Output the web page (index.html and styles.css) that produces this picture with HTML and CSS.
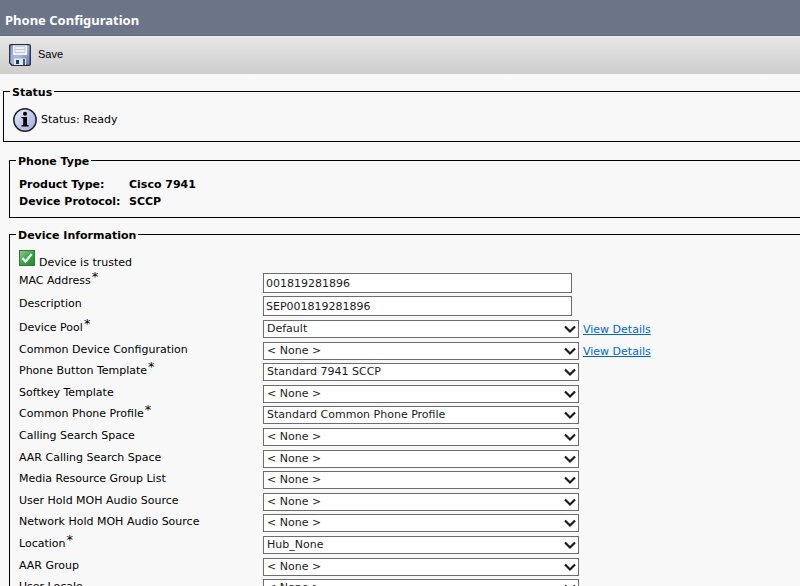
FILE: index.html
```html
<!DOCTYPE html>
<html lang="en">
<head>
<meta charset="utf-8">
<title>Phone Configuration</title>
<link rel="stylesheet" href="styles.css">
</head>
<body>
<svg class="defs" aria-hidden="true">
  <symbol id="chevron" viewBox="0 0 12 9"><path d="M1 1.5 L6 6.5 L11 1.5" fill="none" stroke="#1a1a1a" stroke-width="2.2"/></symbol>
</svg>
<header class="title"><h1>Phone Configuration</h1></header>
<div class="toolbar">
  <button type="button" class="save">
    <svg class="disk" viewBox="0 0 22 22" aria-hidden="true">
      <defs><linearGradient id="disk-body" x1="0" y1="0" x2="1" y2="1"><stop offset="0" stop-color="#8f9fc4"/><stop offset=".5" stop-color="#a9b8dc"/><stop offset="1" stop-color="#5d70a4"/></linearGradient></defs>
      <path d="M2 .7H20Q21.3.7 21.3 2V20Q21.3 21.3 20 21.3H3L.7 19V2Q.7.7 2 .7Z" fill="url(#disk-body)" stroke="#252b3d" stroke-width="1.3"/>
      <path d="M4 1.3H18V11H4Z" fill="#f1f2f5"/>
      <path d="M6 2.5H16V8.5H6ZM6 5.5H16" fill="none" stroke="#c6c8cd"/>
      <path d="M5 14.5H17V21H5Z" fill="#e4e9f0"/>
      <path d="M7 16H10V20H7Z" fill="#143a70"/>
      <path d="M14 15H16V21H14Z" fill="#3a5a8c"/>
    </svg>
    <span>Save</span>
  </button>
</div>
<form class="content">
  <fieldset class="group status">
    <legend>Status</legend>
    <div class="status-line">
      <svg class="info" viewBox="0 0 24 24" aria-hidden="true">
        <defs><linearGradient id="info-fill" x1="0" y1="0" x2="1" y2="1"><stop offset="0" stop-color="#edf2fc"/><stop offset=".5" stop-color="#c0c9ea"/><stop offset="1" stop-color="#a5a9da"/></linearGradient></defs>
        <circle cx="12" cy="12" r="11.2" fill="url(#info-fill)" stroke="#20232e" stroke-width="1.5"/>
        <circle cx="12" cy="5.8" r="2"/>
        <path d="M8.3 9H14V16.8L15.8 17.4V18.5H8.3V17.4L10.2 16.8V10.6L8.3 10.1Z"/>
      </svg>
      <span>Status: Ready</span>
    </div>
  </fieldset>

  <fieldset class="group type">
    <legend>Phone Type</legend>
    <dl class="facts">
      <dt>Product Type:</dt><dd>Cisco 7941</dd>
      <dt>Device Protocol:</dt><dd>SCCP</dd>
    </dl>
  </fieldset>

  <fieldset class="group device">
    <legend>Device Information</legend>
    <div class="trusted">
      <svg class="check" viewBox="0 0 16 16" aria-hidden="true">
        <defs><linearGradient id="check-fill" x1="0" y1="0" x2="1" y2="1"><stop offset="0" stop-color="#8fd08f"/><stop offset=".5" stop-color="#3da64a"/><stop offset="1" stop-color="#1f8a33"/></linearGradient></defs>
        <rect x=".5" y=".5" width="15" height="15" fill="url(#check-fill)" stroke="#3c7043"/>
        <path d="M3.5 8.3L6.6 11.6L12.6 4" fill="none" stroke="#fff" stroke-width="2.3"/>
      </svg>
      <span>Device is trusted</span>
    </div>
    <div class="row text first"><label for="mac">MAC Address<span class="req">*</span></label><input id="mac" type="text" value="001819281896"></div>
    <div class="row text"><label for="desc">Description</label><input id="desc" type="text" value="SEP001819281896"></div>
    <div class="choices">
      <div class="row"><label for="pool">Device Pool<span class="req">*</span></label><span class="pick"><select id="pool"><option>Default</option></select><svg><use href="#chevron"/></svg></span><a href="#pool">View Details</a></div>
      <div class="row"><label for="common">Common Device Configuration</label><span class="pick"><select id="common"><option>&lt; None &gt;</option></select><svg><use href="#chevron"/></svg></span><a href="#common">View Details</a></div>
      <div class="row"><label for="button">Phone Button Template<span class="req">*</span></label><span class="pick"><select id="button"><option>Standard 7941 SCCP</option></select><svg><use href="#chevron"/></svg></span></div>
      <div class="row"><label for="softkey">Softkey Template</label><span class="pick"><select id="softkey"><option>&lt; None &gt;</option></select><svg><use href="#chevron"/></svg></span></div>
      <div class="row"><label for="profile">Common Phone Profile<span class="req">*</span></label><span class="pick"><select id="profile"><option>Standard Common Phone Profile</option></select><svg><use href="#chevron"/></svg></span></div>
      <div class="row"><label for="css">Calling Search Space</label><span class="pick"><select id="css"><option>&lt; None &gt;</option></select><svg><use href="#chevron"/></svg></span></div>
      <div class="row"><label for="aarcss">AAR Calling Search Space</label><span class="pick"><select id="aarcss"><option>&lt; None &gt;</option></select><svg><use href="#chevron"/></svg></span></div>
      <div class="row"><label for="media">Media Resource Group List</label><span class="pick"><select id="media"><option>&lt; None &gt;</option></select><svg><use href="#chevron"/></svg></span></div>
      <div class="row"><label for="usermoh">User Hold MOH Audio Source</label><span class="pick"><select id="usermoh"><option>&lt; None &gt;</option></select><svg><use href="#chevron"/></svg></span></div>
      <div class="row"><label for="netmoh">Network Hold MOH Audio Source</label><span class="pick"><select id="netmoh"><option>&lt; None &gt;</option></select><svg><use href="#chevron"/></svg></span></div>
      <div class="row"><label for="location">Location<span class="req">*</span></label><span class="pick"><select id="location"><option>Hub_None</option></select><svg><use href="#chevron"/></svg></span></div>
      <div class="row"><label for="aargroup">AAR Group</label><span class="pick"><select id="aargroup"><option>&lt; None &gt;</option></select><svg><use href="#chevron"/></svg></span></div>
      <div class="row"><label for="locale">User Locale</label><span class="pick"><select id="locale"><option>&lt; None &gt;</option></select><svg><use href="#chevron"/></svg></span></div>
    </div>
  </fieldset>
</form>
</body>
</html>
```
FILE: styles.css
```css
* { box-sizing: border-box; }
html { scrollbar-width: none; }
body {
  margin: 0;
  background: #f8f8f8;
  color: #000;
  font: 11px/14px Verdana, "DejaVu Sans", sans-serif;
  overflow-x: hidden;
}
svg { display: block; }
.defs { display: none; }

.title {
  height: 36px;
  padding: 12px 5px 0;
  background: #6c7588;
  border-bottom: 1px solid #5f687a;
}
h1 { margin: 0; color: #fff; font: bold 13px/16px "Noto Sans", sans-serif; }
.toolbar {
  height: 38px;
  padding: 7px 9px;
  background: linear-gradient(#e6e6e6, #cdcdcd);
  border-top: 1px solid #f0f0f0;
}
.save {
  display: flex;
  gap: 7px;
  padding: 0;
  border: 0;
  background: none;
  color: #000;
  font: 11px/20px "Liberation Sans", Arial, sans-serif;
}
.disk { width: 22px; height: 22px; }

.group {
  min-width: 0;
  margin: 0 0 0 9px;
  padding: 0 0 0 9px;
  border: 1px solid #000;
  border-right: 0;
}
legend {
  margin-left: -3px;
  padding: 3px 2px 0;
  line-height: 12px;
  font-weight: bold;
}
.content { padding-top: 10px; }
.status { margin-left: 3px; }
.status-line {
  display: flex;
  align-items: center;
  gap: 4px;
  padding: 9px 0;
}
.info { width: 24px; height: 24px; }

.type { margin-top: 11px; }
.facts {
  display: grid;
  grid-template-columns: 110px 1fr;
  margin: 0;
  padding: 8px 0 7px;
  line-height: 17px;
  font-weight: bold;
}
dd { margin: 0; }

.device { margin-top: 9px; }
.trusted { display: flex; gap: 4px; padding-top: 8px; height: 31px; }
.trusted span { padding-top: 6px; }
.check { width: 16px; height: 16px; }

.row {
  display: grid;
  grid-template-columns: 244px 316px auto;
  justify-content: start;
  align-items: start;
  height: 22px;
}
.row label { padding-top: 1px; }
.choices .row:nth-child(5n+2),
.choices .row:nth-child(5n+4) { height: 21px; }
.row.text { height: 24px; }
.row.first { height: 23px; }
.row.text input { width: 309px; height: 20px; }
.req { font-size: 13px; line-height: 0; vertical-align: 3px; padding-left: 1px; }
input, select {
  margin: 0;
  border: 1px solid #6d6d6d;
  border-radius: 0;
  background: #fff;
  color: #1a1a1a;
  font: inherit;
}
input { padding: 0 2px; }
.pick { display: grid; }
.pick > * { grid-area: 1 / 1; }
.pick select { width: 100%; height: 18px; padding: 0 3px; appearance: none; }
.pick svg { width: 12px; height: 9px; place-self: center end; margin-right: 3px; pointer-events: none; }
.row a { margin: 3px 0 0 4px; color: #0066cc; }
```
